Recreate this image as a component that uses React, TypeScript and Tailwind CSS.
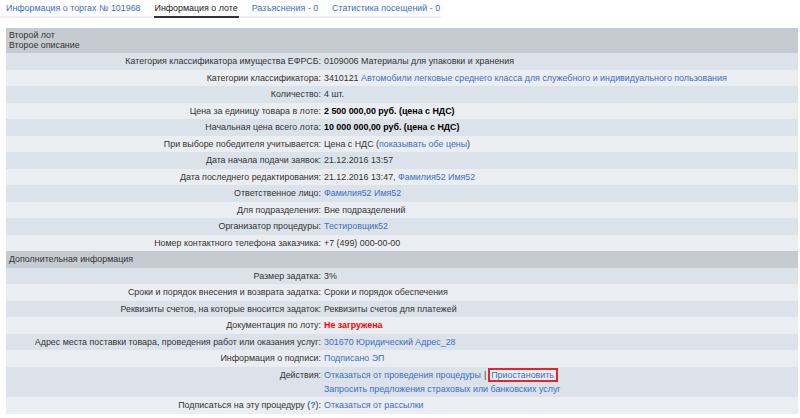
import React from "react";

type Row = {
  label: React.ReactNode;
  value: React.ReactNode;
};

const Link = ({ children }: { children: React.ReactNode }) => (
  <a className="text-[#3a6fc4] cursor-pointer">{children}</a>
);

const mainRows: Row[] = [
  {
    label: "Категория классификатора имущества ЕФРСБ:",
    value: "0109006 Материалы для упаковки и хранения",
  },
  {
    label: "Категории классификатора:",
    value: (
      <>
        3410121{" "}
        <Link>
          Автомобили легковые среднего класса для служебного и индивидуального пользования
        </Link>
      </>
    ),
  },
  { label: "Количество:", value: "4 шт." },
  {
    label: "Цена за единицу товара в лоте:",
    value: <b className="text-black">2 500 000,00 руб. (цена с НДС)</b>,
  },
  {
    label: "Начальная цена всего лота:",
    value: <b className="text-black">10 000 000,00 руб. (цена с НДС)</b>,
  },
  {
    label: "При выборе победителя учитывается:",
    value: (
      <>
        Цена с НДС (<Link>показывать обе цены</Link>)
      </>
    ),
  },
  { label: "Дата начала подачи заявок:", value: "21.12.2016 13:57" },
  {
    label: "Дата последнего редактирования:",
    value: (
      <>
        21.12.2016 13:47, <Link>Фамилия52 Имя52</Link>
      </>
    ),
  },
  { label: "Ответственное лицо:", value: <Link>Фамилия52 Имя52</Link> },
  { label: "Для подразделения:", value: "Вне подразделений" },
  { label: "Организатор процедуры:", value: <Link>Тестировщик52</Link> },
  { label: "Номер контактного телефона заказчика:", value: "+7 (499) 000-00-00" },
];

const extraRows: Row[] = [
  { label: "Размер задатка:", value: "3%" },
  {
    label: "Сроки и порядок внесения и возврата задатка:",
    value: "Сроки и порядок обеспечения",
  },
  {
    label: "Реквизиты счетов, на которые вносится задаток:",
    value: "Реквизиты счетов для платежей",
  },
  {
    label: "Документация по лоту:",
    value: <b className="text-[#ff0000]">Не загружена</b>,
  },
  {
    label: "Адрес места поставки товара, проведения работ или оказания услуг:",
    value: <Link>301670 Юридический Адрес_28</Link>,
  },
  { label: "Информация о подписи:", value: <Link>Подписано ЭП</Link> },
  {
    label: "Действия:",
    value: (
      <>
        <div className="flex items-center h-[14px]">
          <Link>Отказаться от проведения процедуры</Link>
          <span className="ml-[3px] mr-[2px]">|</span>
          <span className="inline-block h-[14px] leading-[10px] border-2 border-[#e3262b] bg-[#e9edf2] pl-[1px] pr-[2px]">
            <Link>Приостановить</Link>
          </span>
        </div>
        <div>
          <Link>Запросить предложения страховых или банковских услуг</Link>
        </div>
      </>
    ),
  },
  {
    label: (
      <>
        Подписаться на эту процедуру (<b className="text-[#3a6fc4]">?</b>):
      </>
    ),
    value: <Link>Отказаться от рассылки</Link>,
  },
];

function DataRows({ rows }: { rows: Row[] }) {
  return (
    <>
      {rows.map((r, i) => (
        <div
          key={i}
          className={`grid grid-cols-[315px_1fr] py-[1.25px] ${
            i % 2 === 0 ? "bg-[#dce2ea]" : "bg-[#eaedf1]"
          }`}
        >
          <div className="text-right whitespace-nowrap">{r.label}</div>
          <div className="pl-[3px] whitespace-nowrap">{r.value}</div>
        </div>
      ))}
    </>
  );
}

export default function App() {
  const tabs = [
    { name: "Информация о торгах № 101968", active: false },
    { name: "Информация о лоте", active: true },
    { name: "Разъяснения - 0", active: false },
    { name: "Статистика посещений - 0", active: false },
  ];

  return (
    <div
      className="w-[800px] h-[418px] bg-white text-[#333] text-[8.9px] leading-[14px] overflow-hidden"
      style={{ fontFamily: '"Liberation Sans", Arial, sans-serif' }}
    >
      {/* Tabs */}
      <div className="flex gap-[14px] pl-[6px] w-[441px] border-b-2 border-[#efefef] h-[18px]">
        {tabs.map((t) => (
          <div
            key={t.name}
            className={`h-[18px] -mb-[2px] pt-[1px] whitespace-nowrap ${
              t.active
                ? "text-[#1a1a1a] border-b-2 border-[#333] px-[1px] -mx-[1px]"
                : "text-[#3a6fc4]"
            }`}
          >
            {t.name}
          </div>
        ))}
      </div>

      {/* Lot table */}
      <div className="mt-[9.5px] ml-[6px] mr-[2px]">
        <div className="bg-[#c6cbd2] px-[3px] pt-[2px] h-[25.5px] leading-[10.7px]">
          <div>Второй лот</div>
          <div>Второе описание</div>
        </div>
        <DataRows rows={mainRows} />
        <div className="bg-[#c6cbd2] px-[3px] py-[1.25px]">Дополнительная информация</div>
        <DataRows rows={extraRows} />
      </div>
    </div>
  );
}
